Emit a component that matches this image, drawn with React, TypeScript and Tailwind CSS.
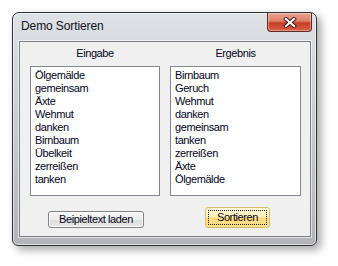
import React from "react";

const left = ["Ölgemälde", "gemeinsam", "Äxte", "Wehmut", "danken", "Birnbaum", "Übelkeit", "zerreißen", "tanken"];
const right = ["Birnbaum", "Geruch", "Wehmut", "danken", "gemeinsam", "tanken", "zerreißen", "Äxte", "Ölgemälde"];

function CloseButton() {
  return (
    <div className="absolute top-0 right-[4px] w-[45px] h-[19px] rounded-b-[4px] border border-t-0 border-[#5e2a22] bg-[linear-gradient(to_bottom,#eba595_0%,#de7f68_45%,#c63c24_55%,#d9614a_100%)] shadow-[inset_0_0_0_1px_rgba(255,255,255,0.35)] flex items-center justify-center">
      <svg width="14" height="11" viewBox="0 0 14 11">
        <path d="M3 2 L11 9 M11 2 L3 9" stroke="#3a1610" strokeWidth="4" strokeLinecap="square" />
        <path d="M3 2 L11 9 M11 2 L3 9" stroke="#ffffff" strokeWidth="2.2" strokeLinecap="square" />
      </svg>
    </div>
  );
}

function ListBox({ items }: { items: string[] }) {
  return (
    <div className="h-[130px] border border-[#828790] bg-white pl-[4px] pt-[2px] text-[11px] leading-[13px] tracking-[-0.4px] text-[#05051a]">
      {items.map((t) => (
        <div key={t}>{t}</div>
      ))}
    </div>
  );
}

export default function App() {
  return (
    <div className="w-[338px] h-[266px] bg-white pl-[12px] pt-[12px]" style={{ fontFamily: '"Liberation Sans", Arial, sans-serif' }}>
      <div className="relative w-[305px] h-[234px] rounded-t-[7px] rounded-b-[6px] border border-[#2f3133] bg-[linear-gradient(to_bottom,#dee2e7_0%,#d2d5d9_25%,#b2b4b7_100%)] shadow-[inset_0_0_0_1px_rgba(255,255,255,0.55),4px_4px_9px_rgba(0,0,0,0.35)] flex flex-col">
        <div className="h-[28px] pl-[8px] pt-[6px] text-[12px] leading-[14px] tracking-[-0.1px] text-[#101018]">Demo Sortieren</div>
        <CloseButton />
        <div className="ml-[6px] mr-[5px] h-[196px] border border-[#7d8085] bg-[#f0f0f0] shadow-[0_0_0_1px_rgba(255,255,255,0.6)] grid grid-cols-[130px_131px] gap-x-[10px] pl-[10px] text-[11px] tracking-[-0.4px] text-[#05051a]">
          <div className="flex flex-col">
            <div className="mt-[5px] h-[13px] leading-[13px] text-center">Eingabe</div>
            <div className="mt-[6px]">
              <ListBox items={left} />
            </div>
            <div className="h-[21px] mt-[11px] flex items-end justify-center">
              <div className="w-[96px] h-[17px] ml-[2px] rounded-[3px] border border-[#7f848b] bg-[linear-gradient(to_bottom,#f6f6f6_0%,#ececec_50%,#dddddd_51%,#e8e8e8_100%)] shadow-[inset_0_0_0_1px_rgba(255,255,255,0.7)] flex items-center justify-center leading-[13px]">
                Beipieltext laden
              </div>
            </div>
          </div>
          <div className="flex flex-col">
            <div className="mt-[5px] h-[13px] leading-[13px] text-center">Ergebnis</div>
            <div className="mt-[6px]">
              <ListBox items={right} />
            </div>
            <div className="h-[21px] mt-[11px] flex items-end justify-center">
              <div className="w-[65px] h-[21px] ml-[4px] rounded-[3px] border border-[#d9bd6e] bg-[linear-gradient(to_bottom,#fff8dc_0%,#fdefb8_45%,#ffd97a_55%,#ffe08e_100%)] p-[2px]">
                <div className="w-full h-full border border-dotted border-[#222] flex items-center justify-center leading-[13px]">
                  Sortieren
                </div>
              </div>
            </div>
          </div>
        </div>
      </div>
    </div>
  );
}
